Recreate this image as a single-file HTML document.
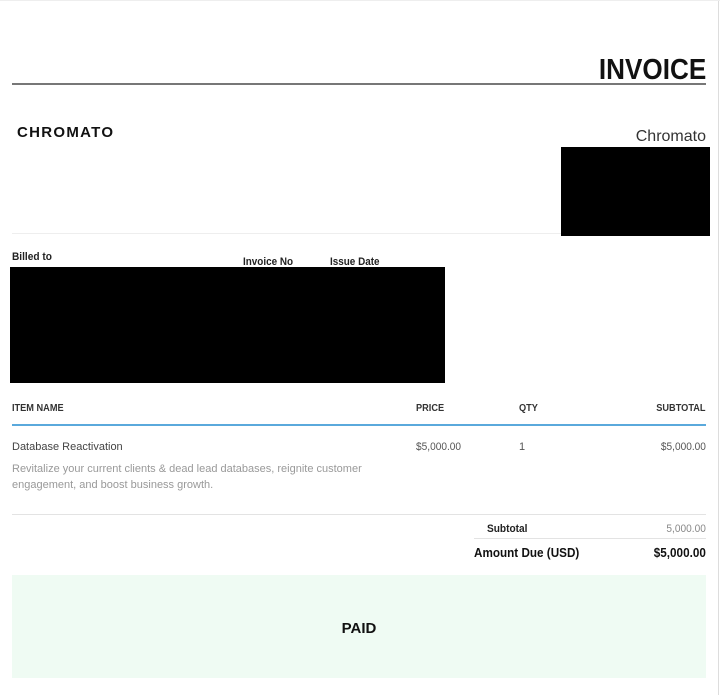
<!DOCTYPE html>
<html><head><meta charset="utf-8"><style>
body{margin:0;width:720px;height:695px;background:#fff;position:relative;overflow:hidden;font-family:"Liberation Sans",sans-serif;color:#222}
.a{position:absolute;white-space:nowrap}
.r{text-align:right}
</style></head><body>
<div class="a" style="left:718px;top:0;width:1px;height:695px;background:#ddd"></div>
<div class="a" style="left:0;top:0;width:720px;height:1px;background:#eee"></div>
<div class="a r" style="right:14px;top:54px;font-size:29px;font-weight:bold;transform:scaleX(0.9);transform-origin:right center;color:#111">INVOICE</div>
<div class="a" style="left:12px;top:83px;width:694px;height:2px;background:#777"></div>
<div class="a" style="left:17px;top:124px;font-size:15px;font-weight:bold;letter-spacing:1.3px;color:#111">CHROMATO</div>
<div class="a r" style="right:14px;top:128px;font-size:16px;color:#333">Chromato</div>
<div class="a" style="left:561px;top:147px;width:149px;height:89px;background:#000"></div>
<div class="a" style="left:12px;top:233px;width:549px;height:1px;background:#eee"></div>
<div class="a" style="left:12px;top:251px;font-size:11px;font-weight:bold;transform:scaleX(0.92);transform-origin:left">Billed to</div>
<div class="a" style="left:243px;top:256px;font-size:11px;font-weight:bold;transform:scaleX(0.9);transform-origin:left">Invoice No</div>
<div class="a" style="left:330px;top:256px;font-size:11px;font-weight:bold;transform:scaleX(0.9);transform-origin:left">Issue Date</div>
<div class="a" style="left:10px;top:267px;width:435px;height:116px;background:#000"></div>
<div class="a" style="left:12px;top:403px;font-size:10px;font-weight:bold;color:#333;transform:scaleX(0.92);transform-origin:left">ITEM NAME</div>
<div class="a" style="left:416px;top:403px;font-size:10px;font-weight:bold;color:#333;transform:scaleX(0.92);transform-origin:left">PRICE</div>
<div class="a" style="left:519px;top:403px;font-size:10px;font-weight:bold;color:#333;transform:scaleX(0.92);transform-origin:left">QTY</div>
<div class="a" style="right:14px;top:403px;font-size:10px;font-weight:bold;color:#333;transform:scaleX(0.92);transform-origin:right">SUBTOTAL</div>
<div class="a" style="left:12px;top:424px;width:694px;height:2px;background:#5aa9dc"></div>
<div class="a" style="left:12px;top:441px;font-size:11px;color:#444">Database Reactivation</div>
<div class="a" style="left:416px;top:441px;font-size:11px;color:#555;transform:scaleX(0.92);transform-origin:left">$5,000.00</div>
<div class="a" style="left:519px;top:441px;font-size:11px;color:#555">1</div>
<div class="a" style="right:14px;top:441px;font-size:11px;color:#555;transform:scaleX(0.92);transform-origin:right">$5,000.00</div>
<div class="a" style="left:12px;top:461px;font-size:11px;color:#999;line-height:16px">Revitalize your current clients &amp; dead lead databases, reignite customer<br>engagement, and boost business growth.</div>
<div class="a" style="left:12px;top:514px;width:694px;height:1px;background:#e3e3e3"></div>
<div class="a" style="left:487px;top:523px;font-size:11px;font-weight:bold;color:#222;transform:scaleX(0.92);transform-origin:left">Subtotal</div>
<div class="a" style="right:14px;top:523px;font-size:11px;color:#888;transform:scaleX(0.92);transform-origin:right">5,000.00</div>
<div class="a" style="left:474px;top:538px;width:232px;height:1px;background:#e3e3e3"></div>
<div class="a" style="left:474px;top:545px;font-size:13px;font-weight:bold;color:#111;transform:scaleX(0.9);transform-origin:left">Amount Due (USD)</div>
<div class="a" style="right:14px;top:545px;font-size:13px;font-weight:bold;color:#111;transform:scaleX(0.9);transform-origin:right">$5,000.00</div>
<div class="a" style="left:12px;top:575px;width:694px;height:103px;background:#effbf3"></div>
<div class="a" style="left:12px;top:620px;width:694px;text-align:center;font-size:15px;font-weight:bold;color:#111">PAID</div>
</body></html>
